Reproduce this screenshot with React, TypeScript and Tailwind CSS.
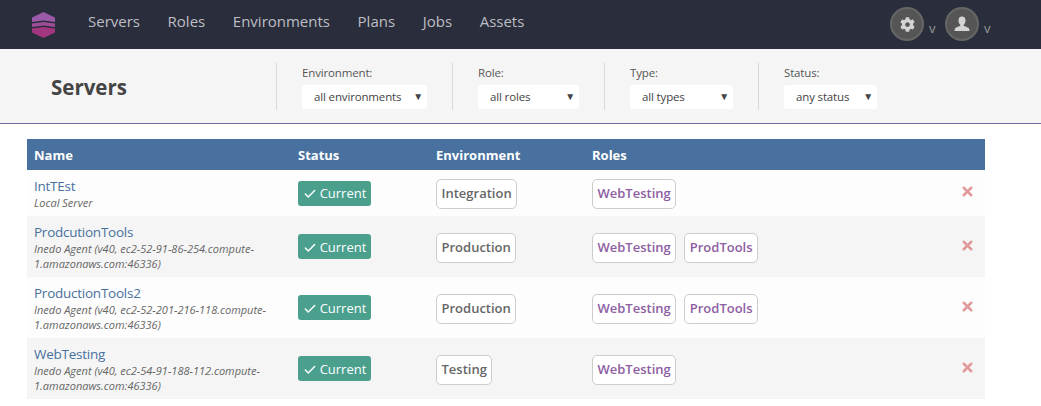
import { Check, X } from "lucide-react";
import { FaCog } from "react-icons/fa";

const navItems = ["Servers", "Roles", "Environments", "Plans", "Jobs", "Assets"];

const filters = [
  { label: "Environment:", value: "all environments", width: "w-[125px]" },
  { label: "Role:", value: "all roles", width: "w-[101px]" },
  { label: "Type:", value: "all types", width: "w-[103px]" },
  { label: "Status:", value: "any status", width: "w-[93px]" },
];

const servers = [
  { name: "IntTEst", detail: ["Local Server"], env: "Integration", roles: ["WebTesting"] },
  {
    name: "ProdcutionTools",
    detail: ["Inedo Agent (v40, ec2-52-91-86-254.compute-", "1.amazonaws.com:46336)"],
    env: "Production",
    roles: ["WebTesting", "ProdTools"],
  },
  {
    name: "ProductionTools2",
    detail: ["Inedo Agent (v40, ec2-52-201-216-118.compute-", "1.amazonaws.com:46336)"],
    env: "Production",
    roles: ["WebTesting", "ProdTools"],
  },
  {
    name: "WebTesting",
    detail: ["Inedo Agent (v40, ec2-54-91-188-112.compute-", "1.amazonaws.com:46336)"],
    env: "Testing",
    roles: ["WebTesting"],
  },
];

function Logo() {
  return (
    <svg width="23" height="26" viewBox="0 0 23 26" className="ml-[2px] shrink-0">
      <polygon points="11.500,0 23,5.500 23,10 11.500,8.500 0,10 0,5.500" fill="#9a5aa8" />
      <polygon points="0,11.500 11.500,10 23,11.500 23,15 11.500,13.500 0,15" fill="#a04d97" />
      <polygon points="0,16.500 11.500,15 23,16.500 23,20.500 11.500,26 0,20.500" fill="#a2367f" />
    </svg>
  );
}

function UserIcon() {
  return (
    <svg width="16" height="16" viewBox="0 0 16 16" fill="#d4d4d4">
      <path d="M8 0.5c2.2 0 3.500 1.600 3.500 3.900 0 1.700-.8 3.400-1.700 4.300-.3.4-.2 1 .3 1.200 1.700.7 4.400 1.600 4.900 2.600.3.7.5 1.600.5 2.500H.5c0-.9.2-1.800.5-2.500.5-1 3.200-1.900 4.900-2.600.5-.2.6-.8.3-1.200C5.300 7.800 4.500 6.100 4.500 4.400 4.500 2.100 5.800.5 8 .5z" />
    </svg>
  );
}

function CircleButton({ children }: { children: React.ReactNode }) {
  return (
    <div className="flex items-center">
      <div className="flex h-[34px] w-[34px] items-center justify-center rounded-full border-2 border-[#666] bg-[#555]">
        {children}
      </div>
      <span className="ml-[5px] mt-[8px] w-[7px] text-[13px] leading-[13px] text-[#999]">v</span>
    </div>
  );
}

function Filter({ label, value, width }: { label: string; value: string; width: string }) {
  return (
    <div className="h-[47px] border-l border-[#d8d8d8] px-[25px]">
      <div className="mt-[1px] text-[11.5px] leading-[17px] tracking-[-0.15px] text-[#555]">{label}</div>
      <div className={`mt-[4px] flex h-[24px] items-center justify-between rounded-[3px] bg-white pl-[12px] pr-[4px] text-[11.5px] tracking-[-0.15px] text-[#444] ${width}`}>
        <span>{value}</span>
        <span className="mb-[1px] text-[10px] text-[#444]">▼</span>
      </div>
    </div>
  );
}

export default function App() {
  return (
    <div className="min-h-[406px] overflow-hidden bg-white font-['Open_Sans',sans-serif]">
      <header className="flex h-[49px] items-center bg-[#2a2d3b] pl-[30px]">
        <Logo />
        <nav className="mb-[6px] ml-[33px] flex gap-[27.6px] text-[15px] text-[#bdbec4]">
          {navItems.map((item) => (
            <span key={item}>{item}</span>
          ))}
        </nav>
        <div className="mb-[1px] ml-auto mr-[50px] flex items-center gap-[9px]">
          <CircleButton>
            <FaCog size={15} color="#d4d4d4" />
          </CircleButton>
          <CircleButton>
            <UserIcon />
          </CircleButton>
        </div>
      </header>

      <div className="flex h-[75px] items-center border-b border-[#7b68a0] bg-[#f5f5f5]">
        <h1 className="mt-[2px] w-[276px] pl-[51px] text-[20.500px] font-bold text-[#444]">Servers</h1>
        {filters.map((filter) => (
          <Filter key={filter.label} {...filter} />
        ))}
      </div>

      <div className="pl-[27px] pt-[15px]">
        <table className="w-[958px] table-fixed border-collapse">
          <thead>
            <tr className="h-[31px] bg-[#48719f] text-left text-[13px] font-bold text-white">
              <th className="w-[264px] pl-[7px] pt-[2px]">Name</th>
              <th className="w-[138px] pl-[7px] pt-[2px]">Status</th>
              <th className="w-[156px] pl-[7px] pt-[2px]">Environment</th>
              <th className="pl-[7px] pt-[2px]">Roles</th>
              <th className="w-[40px]"></th>
            </tr>
          </thead>
          <tbody>
            {servers.map((server, i) => (
              <tr key={server.name} className={i % 2 === 0 ? "bg-[#fdfdfd]" : "bg-[#f5f5f5]"}>
                <td className={i === 0 ? "h-[46px] pl-[7px]" : "h-[61px] pl-[7px]"}>
                  <div className="pt-[2px] text-[13.500px] leading-[17px] tracking-[-0.25px] text-[#48719f]">{server.name}</div>
                  {server.detail.map((line) => (
                    <div key={line} className="text-[11px] italic leading-[15px] text-[#666]">
                      {line}
                    </div>
                  ))}
                </td>
                <td className="pl-[7px]">
                  <span className="flex h-[25px] w-[73px] items-center justify-center gap-[3px] rounded-[3px] bg-[#4a9f8d] pt-[2px] text-[13px] text-white">
                    <Check size={14} strokeWidth={2.5} />
                    Current
                  </span>
                </td>
                <td className="pl-[7px] pt-[2px]">
                  <span className="inline-flex h-[30px] items-center rounded-[5px] border border-[#ccc] bg-white px-[4.500px] text-[13px] font-semibold text-[#666]">
                    {server.env}
                  </span>
                </td>
                <td className="pl-[7px] pt-[2px]">
                  <div className="flex gap-[8px]">
                    {server.roles.map((role) => (
                      <span
                        key={role}
                        className="inline-flex h-[30px] items-center rounded-[5px] border border-[#ccc] bg-white px-[4.500px] text-[13px] font-semibold text-[#8e5ea2]"
                      >
                        {role}
                      </span>
                    ))}
                  </div>
                </td>
                <td>
                  <X size={15} strokeWidth={4} color="#e09a9a" className="mb-[3px] ml-[15px]" />
                </td>
              </tr>
            ))}
          </tbody>
        </table>
      </div>
    </div>
  );
}
